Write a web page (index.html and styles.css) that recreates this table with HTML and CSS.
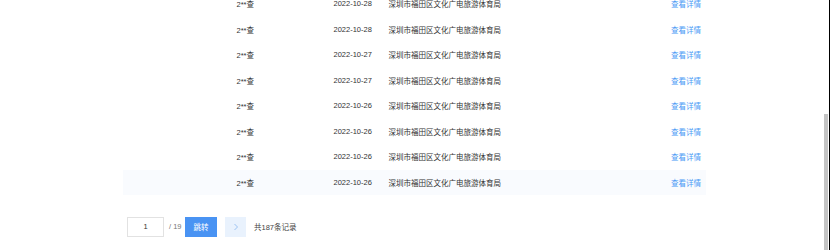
FILE: index.html
```html
<!DOCTYPE html>
<html lang="zh">
<head>
<meta charset="utf-8">
<link rel="stylesheet" href="styles.css">
</head>
<body>
<div class="page">
  <div class="table">
    <div class="row"><span class="name">2**查</span><span class="date">2022-10-28</span><span class="dept">深圳市福田区文化广电旅游体育局</span><a class="link">查看详情</a></div>
    <div class="row"><span class="name">2**查</span><span class="date">2022-10-28</span><span class="dept">深圳市福田区文化广电旅游体育局</span><a class="link">查看详情</a></div>
    <div class="row"><span class="name">2**查</span><span class="date">2022-10-27</span><span class="dept">深圳市福田区文化广电旅游体育局</span><a class="link">查看详情</a></div>
    <div class="row"><span class="name">2**查</span><span class="date">2022-10-27</span><span class="dept">深圳市福田区文化广电旅游体育局</span><a class="link">查看详情</a></div>
    <div class="row"><span class="name">2**查</span><span class="date">2022-10-26</span><span class="dept">深圳市福田区文化广电旅游体育局</span><a class="link">查看详情</a></div>
    <div class="row"><span class="name">2**查</span><span class="date">2022-10-26</span><span class="dept">深圳市福田区文化广电旅游体育局</span><a class="link">查看详情</a></div>
    <div class="row"><span class="name">2**查</span><span class="date">2022-10-26</span><span class="dept">深圳市福田区文化广电旅游体育局</span><a class="link">查看详情</a></div>
    <div class="row hover"><span class="name">2**查</span><span class="date">2022-10-26</span><span class="dept">深圳市福田区文化广电旅游体育局</span><a class="link">查看详情</a></div>
  </div>
  <div class="pager">
    <div class="page-input">1</div>
    <span class="total-pages">/ 19</span>
    <button class="go">跳转</button>
    <button class="next"><svg width="6" height="8" viewBox="0 0 6 8"><path d="M1.5 1 L4.5 4 L1.5 7" fill="none" stroke="#9cc3f3" stroke-width="1"/></svg></button>
    <span class="count">共187条记录</span>
  </div>
</div>
<div class="scrollbar"><div class="thumb"></div></div>
</body>
</html>
```
FILE: styles.css
```css
html, body {
  margin: 0;
  padding: 0;
  background: #fff;
  overflow: hidden;
  height: 250px;
}
body {
  font-family: "Liberation Sans", Arial, "Noto Sans CJK SC", sans-serif;
  font-size: 7.5px;
  color: #333;
  position: relative;
}
.page {
  padding-left: 123px;
  width: 583px;
}
.table {
  margin-top: -9.3px;
}
.row {
  display: grid;
  grid-template-columns: 97px 55px 1fr auto;
  align-items: center;
  height: 25.55px;
  padding-left: 113.5px;
  padding-right: 5px;
}
.row.hover {
  background: #f9fbfe;
}
.name, .date, .dept {
  white-space: nowrap;
}
.link {
  color: #4a9af5;
  white-space: nowrap;
}
.pager {
  display: flex;
  align-items: center;
  margin-top: 21.5px;
  padding-left: 4px;
  height: 20px;
}
.page-input {
  box-sizing: border-box;
  width: 37px;
  height: 20px;
  border: 1px solid #e2e2e2;
  display: flex;
  align-items: center;
  justify-content: center;
  color: #333;
}
.total-pages {
  margin-left: 5px;
  color: #777;
  width: 16px;
}
.go {
  margin-left: 0;
  width: 32px;
  height: 20px;
  border: none;
  background: #4993f3;
  color: #fff;
  font: inherit;
  padding: 0;
}
.next {
  margin-left: 8px;
  width: 21px;
  height: 20px;
  border: none;
  background: #e9f2fd;
  padding: 0;
  display: flex;
  align-items: center;
  justify-content: center;
}
.count {
  margin-left: 8px;
  color: #444;
}
.scrollbar {
  position: absolute;
  top: 0;
  right: 0;
  width: 7px;
  height: 250px;
  border-right: 1px solid #000;
  box-sizing: border-box;
}
.thumb {
  position: absolute;
  top: 114px;
  left: 1px;
  width: 4px;
  height: 136px;
  background: #c4c4c4;
}
```
